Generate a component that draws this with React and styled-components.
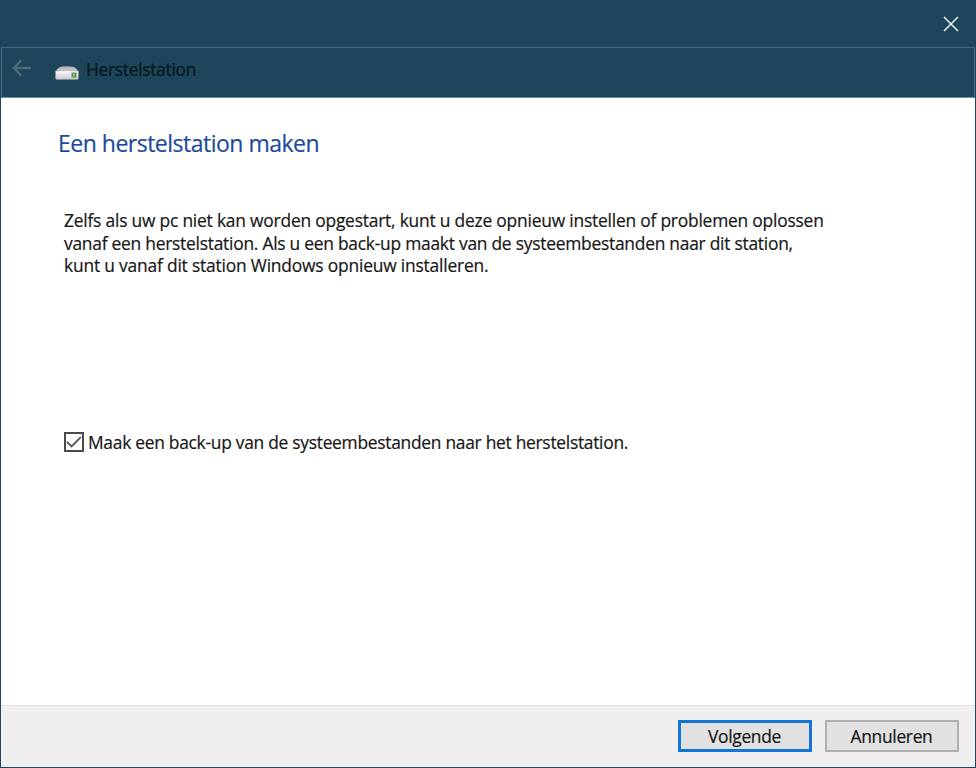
import React from "react";
import styled, { createGlobalStyle } from "styled-components";

const lines = [
  { text: "Zelfs als uw pc niet kan worden opgestart, kunt u deze opnieuw instellen of problemen oplossen", spacing: -0.21 },
  { text: "vanaf een herstelstation. Als u een back-up maakt van de systeembestanden naar dit station,", spacing: -0.25 },
  { text: "kunt u vanaf dit station Windows opnieuw installeren.", spacing: -0.19 },
];

const App = () => {
  const [backup, setBackup] = React.useState(true);

  return (
    <Window>
      <GlobalStyle />
      <TitleBar>
        <CloseBtn aria-label="Sluiten">
          <svg width="16" height="16" viewBox="0 0 16 16">
            <path d="M1 1L15 15M15 1L1 15" stroke="#fff" strokeWidth="1.4" fill="none" />
          </svg>
        </CloseBtn>
      </TitleBar>

      <Frame>
        <Header>
          <BackBtn aria-label="Terug">
            <svg width="20" height="18" viewBox="0 0 20 18">
              <path d="M9 1.5L2 9L9 16.5M2 9H19" stroke="#4f6b77" strokeWidth="2.4" fill="none" />
            </svg>
          </BackBtn>
          <DriveIcon />
          <HeaderText>Herstelstation</HeaderText>
        </Header>

        <Content>
          <Heading>Een herstelstation maken</Heading>
          <Intro>
            {lines.map((l, i) => (
              <Line key={i} $spacing={l.spacing}>{l.text}</Line>
            ))}
          </Intro>
          <CheckRow onClick={() => setBackup(!backup)}>
            <Box>
              {backup && (
                <svg width="16" height="16" viewBox="0 0 16 16">
                  <path d="M1 7.8L5.6 12.4L14.8 3.2" stroke="#555" strokeWidth="1.8" fill="none" />
                </svg>
              )}
            </Box>
            <CheckText>Maak een back-up van de systeembestanden naar het herstelstation.</CheckText>
          </CheckRow>
        </Content>

        <Footer>
          <Button $primary>Volgende</Button>
          <Button>Annuleren</Button>
        </Footer>
      </Frame>
    </Window>
  );
};

const DriveIcon = () => (
  <DriveSvg width="26" height="16" viewBox="0 0 26 16">
    <defs>
      <linearGradient id="top" x1="0" y1="0" x2="0" y2="1">
        <stop offset="0" stopColor="#a9a9ac" />
        <stop offset="1" stopColor="#d9d8dc" />
      </linearGradient>
      <linearGradient id="front" x1="0" y1="0" x2="0" y2="1">
        <stop offset="0" stopColor="#fbfaff" />
        <stop offset="1" stopColor="#c9c8cf" />
      </linearGradient>
    </defs>
    <path d="M1.5 7Q3 3.5 6 2Q13 0.4 20 2Q23 3.5 24.5 7Z" fill="url(#top)" />
    <path d="M1.5 6Q13 4.6 24.5 6V13Q24.5 14.5 23 14.5H3Q1.5 14.5 1.5 13Z" fill="url(#front)" stroke="#8e8d92" strokeWidth="0.6" />
    <rect x="17.5" y="7.6" width="5" height="5" fill="#4f9a45" />
    <rect x="19.2" y="8.8" width="1.4" height="2.6" fill="#a9dc8c" />
  </DriveSvg>
);

const GlobalStyle = createGlobalStyle`
  body {
    margin: 0;
    background: #1d465b;
  }
  * {
    box-sizing: border-box;
  }
`;

const Window = styled.div`
  width: 976px;
  height: 768px;
  display: flex;
  flex-direction: column;
  padding: 0 1px 1px;
  overflow: hidden;
  background: #1d465b;
  color: #171717;
  font-family: "Open Sans", "Noto Sans", sans-serif;
  font-size: 17.4px;
  -webkit-text-stroke: 0.2px;
  white-space: nowrap;
`;

const TitleBar = styled.div`
  height: 47px;
  flex: none;
  display: flex;
  justify-content: flex-end;
  align-items: center;
  padding-right: 8px;
`;

const CloseBtn = styled.button`
  display: flex;
  padding: 8px;
  border: none;
  background: none;
`;

const Frame = styled.div`
  flex: 1;
  display: flex;
  flex-direction: column;
`;

const Header = styled.div`
  height: 51px;
  display: flex;
  align-items: center;
  padding: 0 0 7px 10px;
  border: 1px solid #45697a;
  border-bottom-color: #6f8f9c;
`;

const BackBtn = styled.button`
  display: flex;
  padding: 0 0 2px;
  border: none;
  background: none;
`;

const DriveSvg = styled.svg`
  margin: 7px 0 0 22px;
`;

const HeaderText = styled.span`
  margin-left: 6px;
  line-height: 24px;
  color: #07131c;
  letter-spacing: -0.3px;
`;

const Content = styled.div`
  flex: 1;
  background: #fff;
  padding: 29px 0 0 63px;
`;

const Heading = styled.h1`
  margin: 0 0 0 -6px;
  font-size: 23px;
  line-height: 32px;
  font-weight: 400;
  color: #1e4b9e;
  letter-spacing: -0.5px;
`;

const Intro = styled.div`
  margin-top: 50px;
`;

const Line = styled.div`
  width: max-content;
  line-height: 22.6px;
  letter-spacing: ${(p) => p.$spacing}px;
`;

const CheckRow = styled.div`
  display: flex;
  align-items: center;
  width: max-content;
  margin-top: 153px;
`;

const Box = styled.span`
  width: 20px;
  height: 20px;
  display: flex;
  align-items: center;
  justify-content: center;
  border: 2px solid #4a4a4a;
  background: #fff;
`;

const CheckText = styled.span`
  margin-left: 4px;
  line-height: 24px;
  letter-spacing: -0.28px;
`;

const Footer = styled.div`
  height: 62px;
  display: flex;
  justify-content: flex-end;
  align-items: flex-start;
  gap: 13px;
  padding: 14px 16px 0 0;
  background: #efefef;
  border-top: 1px solid #dedede;
`;

const Button = styled.button`
  width: 134px;
  height: 32px;
  padding: 0 1px 0 0;
  font: inherit;
  line-height: 26px;
  color: #171717;
  letter-spacing: -0.3px;
  background: #e1e1e1;
  border: ${(p) => (p.$primary ? "3px solid #1377d1" : "2px solid #b0b0b0")};
`;

export default App;
